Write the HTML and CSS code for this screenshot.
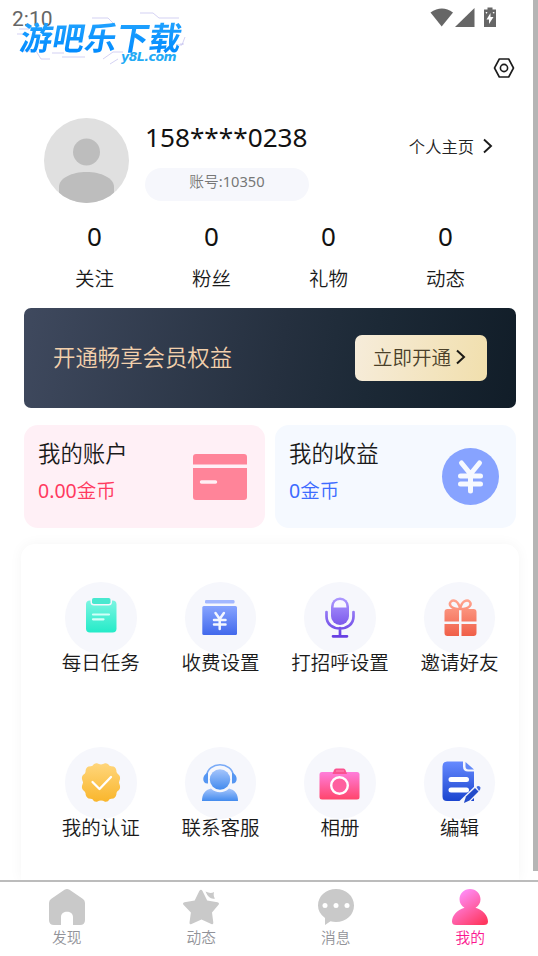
FILE: index.html
```html
<!DOCTYPE html>
<html lang="zh-CN">
<head>
<meta charset="utf-8">
<title>我的</title>
<link rel="stylesheet" href="styles.css">
</head>
<body>
<div class="screen">
  <header class="status">
    <span class="time">2:10</span>
    <svg class="status-icons" width="70" height="24" viewBox="0 0 70 24" fill="#666">
      <path d="M0.500 5.500Q12 -2.500 23 5.500L11.700 19.500Z"/>
      <path d="M44.500 1V20H25Z"/>
      <path d="M57.500 0.500h5v2h3.500v17.500h-12V2.500h3.500z"/>
      <path d="M60.500 6l-4 6.500h2.500v4.500l4.500-7h-3zM55.500 5h2l-1 2zM62.500 5h2l-.5 2z" fill="#fff"/>
    </svg>
  </header>
  <div class="brand">
    <svg class="brand-lines" width="176" height="60" viewBox="0 0 176 60" fill="none" stroke="#aaa5e8" stroke-width="1">
      <path d="M75 11h16l5 5M123 6h13l6 5h20M2 22h10M0 27h8M5 44h14l5 8h9M35 46h12M45 50h23M86 52l10-7h10M93 57l8-5M160 38h5l3-8M163 37h4" opacity=".5"/>
    </svg>
    <div class="brand-name">游吧乐下载</div>
    <div class="brand-url">y8L.com</div>
  </div>
  <div class="toolbar">
    <svg width="22" height="22" viewBox="0 0 22 22" fill="none" stroke="#1c1c1c" stroke-width="1.600" stroke-linejoin="round">
      <path d="M6.300 2h9.400L20.500 11l-4.800 9H6.300L1.500 11z"/><circle cx="11" cy="11" r="3.600"/>
    </svg>
  </div>

  <section class="profile">
    <svg class="avatar" width="85" height="85" viewBox="0 0 85 85">
      <defs><clipPath id="av"><circle cx="42.500" cy="42.500" r="42.500"/></clipPath></defs>
      <g clip-path="url(#av)"><rect width="85" height="85" fill="#e0e0e0"/>
      <circle cx="42.500" cy="34" r="13.500" fill="#bdbdbd"/>
      <path d="M15 90V69C15 60 28 54 42.500 54S70 60 70 69v21z" fill="#bdbdbd"/></g>
    </svg>
    <div class="identity">
      <div class="name">158****0238</div>
      <div class="account">账号:10350</div>
    </div>
    <div class="homepage"><span>个人主页</span>
      <svg width="10" height="16" viewBox="0 0 10 16" fill="none" stroke="#1c1c1c" stroke-width="1.900"><path d="M1 1.500l7 6.500-7 6.500"/></svg>
    </div>
  </section>

  <section class="stats">
    <div><b>0</b><span>关注</span></div>
    <div><b>0</b><span>粉丝</span></div>
    <div><b>0</b><span>礼物</span></div>
    <div><b>0</b><span>动态</span></div>
  </section>

  <section class="vip">
    <span>开通畅享会员权益</span>
    <div class="vip-btn"><span>立即开通</span>
      <svg width="10" height="16" viewBox="0 0 10 16" fill="none" stroke="#1c1a16" stroke-width="2"><path d="M1 1.500l7 6.500-7 6.500"/></svg>
    </div>
  </section>

  <section class="wallets">
    <div class="wallet pink">
      <div><h2>我的账户</h2><p>0.00金币</p></div>
      <svg width="56" height="58" viewBox="0 0 56 58" fill="#ff8499">
        <path d="M1 16.500V9q0-3 3-3h48q3 0 3 3v7.500z"/>
        <path d="M1 20h54v29q0 3-3 3H4q-3 0-3-3z"/>
        <path d="M9.500 34h14" stroke="#fff0f5" stroke-width="3.400" stroke-linecap="round"/>
      </svg>
    </div>
    <div class="wallet blue">
      <div><h2>我的收益</h2><p>0金币</p></div>
      <svg width="58" height="58" viewBox="0 0 58 58">
        <circle cx="29.500" cy="28.500" r="28.500" fill="#87a3ff"/>
        <path d="M20.500 15l9 11 9-11M19.500 28h20M19.500 36h20M29.500 27v16" fill="none" stroke="#f6f9ff" stroke-width="5" stroke-linecap="round" stroke-linejoin="round"/>
      </svg>
    </div>
  </section>

  <section class="panel">
    <div class="tool"><i><svg width="46" height="46" viewBox="0 0 46 46">
      <defs><linearGradient id="g1" x2="0" y2="1"><stop stop-color="#7cf5e2"/><stop offset="1" stop-color="#24ebc8"/></linearGradient></defs>
      <rect x="8" y="6.500" width="30.500" height="32" rx="4" fill="url(#g1)"/>
      <rect x="12.500" y="2" width="21.500" height="9.500" rx="3.500" fill="#f6f7fc"/>
      <rect x="14" y="4" width="18.500" height="6" rx="1.800" fill="#48e8cf"/>
      <path d="M15 20.500h16M15 25.300h10.500" stroke="#d2fff8" stroke-width="2.200" stroke-linecap="round"/>
    </svg></i><span>每日任务</span></div>
    <div class="tool"><i><svg width="46" height="46" viewBox="0 0 46 46">
      <defs><linearGradient id="g2" x2="0" y2="1"><stop stop-color="#87a4ff"/><stop offset="1" stop-color="#4269ec"/></linearGradient></defs>
      <rect x="8" y="6" width="29.500" height="3.500" rx="1.200" fill="#a3b8ff"/>
      <rect x="5.300" y="12" width="34.700" height="29" rx="1.500" fill="url(#g2)"/>
      <path d="M18.500 19l4.200 6 4.200-6M17 26h11.500M17 30.500h11.500M22.700 25v10" fill="none" stroke="#f4f7ff" stroke-width="2.500" stroke-linecap="round"/>
    </svg></i><span>收费设置</span></div>
    <div class="tool"><i><svg width="46" height="46" viewBox="0 0 46 46">
      <defs><linearGradient id="g3" gradientUnits="userSpaceOnUse" x1="0" y1="4" x2="0" y2="43"><stop stop-color="#ac97ff"/><stop offset="1" stop-color="#663ee2"/></linearGradient></defs>
      <rect x="14" y="3.500" width="18" height="27.500" rx="9" fill="url(#g3)"/>
      <path d="M16.500 13.500q0-7.500 6.500-7.500t6.500 7.500z" fill="#f8f7ff"/>
      <path d="M9.500 18v4.500c0 16 27 16 27 0V18M23 34v8M16 42.300h14" fill="none" stroke="url(#g3)" stroke-width="2.700" stroke-linecap="round"/>
    </svg></i><span>打招呼设置</span></div>
    <div class="tool"><i><svg width="46" height="46" viewBox="0 0 46 46">
      <defs><linearGradient id="g4" gradientUnits="userSpaceOnUse" x1="0" y1="6" x2="0" y2="42"><stop stop-color="#ffa48f"/><stop offset="1" stop-color="#f05f48"/></linearGradient></defs>
      <path d="M23.200 15C13 15 11.500 10 14 7.500S21.500 7 23.200 15C24.500 7 30 5 32.500 7.500S33.500 15 23.200 15" fill="none" stroke="url(#g4)" stroke-width="2.400"/>
      <path d="M7.500 27.500V18q0-3 3-3H22v12.500zM24.500 27.500V15H36.500q3 0 3 3v9.500zM7.500 30H22v12H10.500q-3 0-3-3zM24.500 30h15v9q0 3-3 3h-12z" fill="url(#g4)"/>
    </svg></i><span>邀请好友</span></div>
    <div class="tool"><i><svg width="46" height="46" viewBox="0 0 46 46">
      <defs><linearGradient id="g5" x2="0" y2="1"><stop stop-color="#ffd67c"/><stop offset="1" stop-color="#f9b62c"/></linearGradient></defs>
      <path d="M19 4.300Q23 6.500 27 4.300 30 3.700 31.500 6.800 33 7.500 35.500 7.600 38.500 9 38.500 13 39 14.500 41 16 43 18.500 41.400 22 40.500 23.500 41.400 25 43 28.500 41 31 38.500 32.500 38.500 34 38.500 38 35.500 39.400 33 39.500 31.500 40.200 30 43.300 27 42.700 23 40.500 19 42.700 16 43.300 14.500 40.200 13 39.500 10.500 39.400 7.500 38 7.500 34 7 32.500 5 31 3 28.500 4.600 25 5.500 23.500 4.600 22 3 18.500 5 16 7.500 14.500 7.500 13 7.500 9 10.500 7.600 13 7.500 14.500 6.800 16 3.700 19 4.300z" fill="url(#g5)"/>
      <path d="M14.500 23l7 7L33 18" fill="none" stroke="#fff" stroke-width="2.300" stroke-linecap="round" stroke-linejoin="round"/>
    </svg></i><span>我的认证</span></div>
    <div class="tool"><i><svg width="46" height="46" viewBox="0 0 46 46">
      <defs><linearGradient id="g6" x2="0" y2="1"><stop stop-color="#a5c5fc"/><stop offset="1" stop-color="#438bee"/></linearGradient></defs>
      <path d="M9.500 17C11 2 35 2 36.500 17" fill="none" stroke="#79aaf7" stroke-width="1.600"/>
      <path d="M11 13.500v11C5 25 4.500 16 11 13.500zM35 13.500v11C41 25 41.500 16 35 13.500z" fill="#5596f2"/>
      <path d="M5 42c0-7 3-11 9-12.500 5 5 13 5 18 0 6 1.500 9 5.500 9 12.500z" fill="url(#g6)"/>
      <circle cx="23" cy="20.500" r="12" fill="#f6f7fc"/><circle cx="23" cy="20.500" r="10.200" fill="url(#g6)"/>
    </svg></i><span>联系客服</span></div>
    <div class="tool"><i><svg width="46" height="46" viewBox="0 0 46 46">
      <defs><linearGradient id="g7" x2="0" y2="1"><stop stop-color="#ff7edb"/><stop offset="1" stop-color="#ff456c"/></linearGradient></defs>
      <rect x="2.500" y="13" width="40" height="27.500" rx="2.500" fill="url(#g7)"/>
      <path d="M15.500 15l1.500-4q.5-1.500 2-1.500h7.500q1.500 0 2 1.500l1.500 4z" fill="#fa5290"/>
      <path d="M19 12h8" stroke="#ff91bd"/>
      <circle cx="22.500" cy="26.500" r="8.300" fill="#ff609f" stroke="#fff" stroke-width="2.400"/>
    </svg></i><span>相册</span></div>
    <div class="tool"><i><svg width="46" height="46" viewBox="0 0 46 46">
      <defs><linearGradient id="g8" x2="0" y2="1"><stop stop-color="#668aff"/><stop offset="1" stop-color="#1b45cf"/></linearGradient></defs>
      <path d="M10 2.500h16v5q0 5 5 5h6V42H10q-4.500 0-4.500-4.500v-30q0-5 4.500-5z" fill="url(#g8)"/>
      <path d="M28.500 3l8.500 7.500h-5.500q-3 0-3-3z" fill="#638af8"/>
      <path d="M14 20.500h15.500M14 31h15.500" stroke="#fff" stroke-width="5" stroke-linecap="round"/>
      <path d="M25 45L42 28.500" stroke="#f6f7fc" stroke-width="8"/>
      <path d="M27.500 42l1.500-4.500L38 29l3.500 3.500L32.500 41.500 27 44z" fill="#234bc9"/><path d="M39.500 28q2-2 4 .5 0 2-1.500 3.500z" fill="#4269dd"/>
    </svg></i><span>编辑</span></div>
  </section>

  <nav class="tabs">
    <div><svg width="38" height="38" viewBox="0 0 38 38" fill="#c9c9c9"><path d="M16.500 1.800q2.500-1.600 5 0L35 11q2 1.500 2 4V32q0 5-5 5h-7v-8c0-7-12-7-12 0v8H6q-5 0-5-5V15q0-2.500 2-4z"/></svg><span>发现</span></div>
    <div><svg width="38" height="38" viewBox="0 0 38 38" fill="#c9c9c9"><path d="M17.300 3q1.700-2.500 3.200 0l4.700 9.500 10.300 1.700q2.500.8.8 2.800L30 24.500l1.300 10q.2 2.500-2 1.500L19.500 31.500 9.500 36q-2.300 1-2-1.500l1.400-10L1.700 17q-1.700-2 .8-2.800l10.200-1.700z"/><path d="M23.500 3.500q5 2.500 8.500.5-1 4 1 6.500-6 1.500-9.500-7z"/></svg><span>动态</span></div>
    <div><svg width="38" height="38" viewBox="0 0 38 38"><path d="M19 1c10 0 18 7 18 16.500S29 34 19 34q-3 0-5.500-.8L8 37v-7Q1 25 1 17.500C1 8 9 1 19 1z" fill="#c9c9c9"/><g fill="#fff"><circle cx="8" cy="17.500" r="2.500"/><circle cx="19" cy="17.500" r="2.500"/><circle cx="30" cy="17.500" r="2.500"/></g></svg><span>消息</span></div>
    <div class="active"><svg width="38" height="38" viewBox="0 0 38 38"><defs><linearGradient id="g9" gradientUnits="userSpaceOnUse" x1="10" y1="4" x2="32" y2="36"><stop stop-color="#ff8cf6"/><stop offset="1" stop-color="#ff375f"/></linearGradient></defs><path d="M19 1c6 0 10.500 4.500 10.500 10.300 0 3.700-2 6.700-5 8.400C32 21.500 37 28 37 33.500q0 3.500-4 3.500H5q-4 0-4-3.500C1 28 6 21.500 13.500 19.700c-3-1.700-5-4.700-5-8.400C8.500 5.500 13 1 19 1z" fill="url(#g9)"/></svg><span>我的</span></div>
  </nav>
  <div class="scrollbar"></div>
</div>
</body>
</html>
```
FILE: styles.css
```css
* { box-sizing: border-box; }
body { margin: 0; background: #fff; font-family: "Noto Sans", "Noto Sans CJK SC DemiLight", "Noto Sans CJK SC", sans-serif; color: #1a1a1a; font-weight: 400; }
.screen { position: relative; width: 538px; height: 956px; overflow: hidden; display: flex; flex-direction: column; background: #fff; }
.screen svg { display: block; flex: none; }
.status { height: 36px; flex: none; display: flex; justify-content: space-between; padding: 7px 38px 0 12px; }
.time { font: 400 21px/24px Roboto, sans-serif; color: #666; }
.brand { position: absolute; left: 17px; top: 7px; width: 176px; height: 60px; color: #0796ff; }
.brand-lines { position: absolute; left: 0; top: 0; }
.brand-name { position: absolute; left: 4px; top: 11px; font: 700 32.200px/36px "Noto Sans CJK SC", sans-serif; white-space: nowrap; transform: skewX(-10deg); background: linear-gradient(#24a5ff, #008aff); background-clip: text; color: transparent; }
.brand-url { position: absolute; left: 104px; top: 42px; font: italic 700 12.500px/16px "DejaVu Sans", sans-serif; letter-spacing: -.5px; color: #22aaf5; }
.toolbar { height: 82px; flex: none; display: flex; justify-content: flex-end; padding: 21px 23px 0 0; }
.profile { height: 85px; flex: none; display: flex; padding: 0 45px 0 44px; }
.identity { margin-left: 16px; width: 164px; }
.name { font-size: 26.200px; line-height: 38px; color: #111; white-space: nowrap; }
.account { margin-top: 12px; height: 33px; border-radius: 17px; background: #f6f7fc; color: #777; font-size: 14.700px; line-height: 27px; text-align: center; }
.homepage { margin-left: auto; display: flex; height: 56px; align-items: center; gap: 9px; font-size: 16.300px; color: #222; }
.stats { height: 105px; flex: none; padding: 15px 34px 0 36px; display: grid; grid-template-columns: repeat(4, 117px); text-align: center; }
.stats b, .stats span { display: block; }
.stats b { font-weight: 400; font-size: 26px; line-height: 36px; color: #111; }
.stats span { font-size: 19.500px; line-height: 28px; margin-top: 11px; }
.vip { height: 100px; flex: none; margin: 0 22px 0 24px; border-radius: 7px; background: linear-gradient(100deg, #3f495e, #25303f 52%, #1c2936 70%, #111d28); display: flex; align-items: center; justify-content: space-between; padding: 0 29px 0 29px; color: #f2d0ac; font-size: 22.400px; }
.vip > span { margin-top: -3px; }
.vip-btn { width: 132px; height: 46px; border-radius: 7px; background: linear-gradient(100deg, #f6ecda, #f1dfad); display: flex; align-items: center; gap: 5px; padding: 0 0 3px 18px; font-size: 19.500px; color: #4a4029; }
.wallets { flex: none; margin: 17px 22px 0 24px; display: grid; grid-template-columns: 1fr 1fr; gap: 10px; }
.wallet { height: 103px; border-radius: 14px; display: flex; justify-content: space-between; padding: 12px 17px 0 14px; }
.wallet > svg { margin-top: 10.500px; }
.wallet h2 { margin: 0; font-weight: 400; font-size: 22.400px; line-height: 34px; }
.wallet p { margin: 5px 0 0; font-size: 19.500px; line-height: 30px; }
.pink { background: #fff0f6; } .pink p { color: #ff3a5f; }
.blue { background: #f5f9ff; } .blue p { color: #3d6bff; }
.panel { flex: 1; min-height: 0; margin: 16px 19px 0 21px; padding: 38px 0 0 20px; border-radius: 14px 14px 0 0; background: #fff; box-shadow: 0 0 14px rgba(0,0,0,.045); display: grid; grid-template-columns: repeat(4, 119.600px); grid-auto-rows: 165px; }
.tool { display: flex; flex-direction: column; align-items: center; font-size: 19.500px; line-height: 28px; white-space: nowrap; }
.tool i { width: 71.500px; height: 71.500px; border-radius: 50%; background: #f6f7fc; display: flex; justify-content: center; padding-top: 11.500px; }
.tool span { margin-top: -4.500px; }
.tabs { position: relative; height: 76px; flex: none; border-top: 2px solid #bcbcbc; background: #fff; display: grid; grid-template-columns: repeat(4, 134.500px); padding-top: 6px; }
.tabs div { display: flex; flex-direction: column; align-items: center; font-size: 14.700px; line-height: 22px; color: #929399; }
.tabs svg { margin-left: -1px; }
.tabs span { margin-left: -1px; }
.tabs .active { color: #fb168f; }
.scrollbar { position: absolute; right: 0; top: 0; width: 5px; height: 871px; background: #b5b5b5; }
```
